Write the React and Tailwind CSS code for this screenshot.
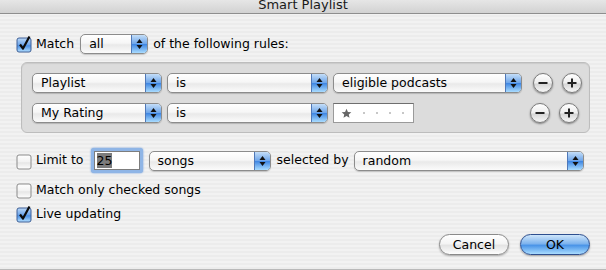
import React from "react";

// Aqua-style up/down arrows for popup buttons
function Arrows() {
  return (
    <svg width="7" height="12" viewBox="0 0 7 12">
      <path d="M3.5 1 L6.5 5 L0.5 5 Z" fill="#111" />
      <path d="M3.5 11 L6.5 7 L0.5 7 Z" fill="#111" />
    </svg>
  );
}

function Popup({ label, className = "" }) {
  return (
    <div
      className={`flex h-[20px] shrink-0 overflow-hidden rounded-[5px] border border-[#8c8c8c] bg-[linear-gradient(#ffffff,#f6f6f6_45%,#e9e9e9_55%,#fbfbfb)] shadow-[0_1px_1px_rgba(0,0,0,0.18)] ${className}`}
    >
      <span className="flex-1 truncate pl-[8px] leading-[18px]">{label}</span>
      <span className="flex w-[16px] items-center justify-center border-l border-[#4f78b8] bg-[linear-gradient(#c4def8,#6fa6ea_48%,#3f86e2_52%,#a9dcff)]">
        <Arrows />
      </span>
    </div>
  );
}

function Checkbox({ checked }) {
  return (
    <svg width="16" height="16" viewBox="0 0 16 16" className="shrink-0 overflow-visible">
      <defs>
        <linearGradient id="cbOn" x1="0" y1="0" x2="0" y2="1">
          <stop offset="0" stopColor="#bcd9f8" />
          <stop offset="0.5" stopColor="#6aa3ea" />
          <stop offset="0.55" stopColor="#4a8fe4" />
          <stop offset="1" stopColor="#b4e0ff" />
        </linearGradient>
        <linearGradient id="cbOff" x1="0" y1="0" x2="0" y2="1">
          <stop offset="0" stopColor="#ffffff" />
          <stop offset="0.5" stopColor="#f2f2f2" />
          <stop offset="0.55" stopColor="#e6e6e6" />
          <stop offset="1" stopColor="#ffffff" />
        </linearGradient>
      </defs>
      <rect
        x="1"
        y="2"
        width="14"
        height="14"
        rx="2"
        fill={checked ? "url(#cbOn)" : "url(#cbOff)"}
        stroke={checked ? "#3e5f96" : "#8a8a8a"}
      />
      {checked && (
        <path
          d="M4 8.5 L7 12.5 L13.5 0.5"
          fill="none"
          stroke="#0b0b0b"
          strokeWidth="2.2"
          strokeLinejoin="round"
        />
      )}
    </svg>
  );
}

function RoundButton({ plus }) {
  return (
    <div className="flex h-[20px] w-[20px] items-center justify-center rounded-full border border-[#7b7b7b] bg-[linear-gradient(#ffffff,#ededed_50%,#d6d6d6_55%,#f7f7f7)] shadow-[0_1px_2px_rgba(0,0,0,0.45)]">
      <svg width="12" height="12" viewBox="0 0 12 12">
        <path d="M1.5 6 H10.5" stroke="#222" strokeWidth="2" />
        {plus && <path d="M6 1.5 V10.5" stroke="#222" strokeWidth="2" />}
      </svg>
    </div>
  );
}

function Rating() {
  return (
    <div className="flex h-[20px] w-[81px] items-center gap-[11px] border border-[#9a9a9a] border-t-[#6e6e6e] bg-white pl-[7px]">
      <svg width="11" height="11" viewBox="0 0 24 24">
        <path
          d="M12 1.5l3.1 7 7.4.6-5.6 4.9 1.7 7.4L12 17.5l-6.6 3.9 1.7-7.4L1.5 9.1l7.4-.6z"
          fill="#666"
        />
      </svg>
      {[0, 1, 2, 3].map((i) => (
        <span key={i} className="h-[2px] w-[2px] rounded-full bg-[#b4b4b4]" />
      ))}
    </div>
  );
}

export default function App() {
  return (
    <div className="flex h-[270px] w-[606px] flex-col overflow-hidden border-b border-[#b9b9b9] bg-[repeating-linear-gradient(0deg,#ececec_0px,#ececec_2px,#f2f2f2_2px,#f2f2f2_4px)] font-['DejaVu_Sans',sans-serif] text-[12.5px] text-black">
      {/* title bar, cut off at the top */}
      <div className="flex h-[14px] justify-center overflow-hidden border-b border-[#8e8e8e] bg-[linear-gradient(#e6e6e6,#d2d2d2)]">
        <span className="-mt-[4px] text-[13px] leading-[18px] text-[#1a1a1a]">Smart Playlist</span>
      </div>

      {/* match row */}
      <div className="mt-[20px] flex h-[20px] items-center pl-[16px]">
        <Checkbox checked />
        <span className="ml-[4px]">Match</span>
        <Popup label="all" className="ml-[6px] w-[68px]" />
        <span className="ml-[5px]">of the following rules:</span>
      </div>

      {/* rules box */}
      <div className="mx-[21px] mt-[8px] flex h-[71px] w-[569px] flex-col gap-[10px] rounded-[6px] border border-[#bdbdbd] bg-[#dcdcdc] px-[10px] pt-[10px] shadow-[inset_0_1px_1px_rgba(0,0,0,0.08)]">
        <div className="flex h-[20px] items-center">
          <Popup label="Playlist" className="w-[130px]" />
          <Popup label="is" className="ml-[5px] w-[161px]" />
          <Popup label="eligible podcasts" className="ml-[5px] w-[189px]" />
          <div className="ml-[11px] flex gap-[9px]">
            <RoundButton />
            <RoundButton plus />
          </div>
        </div>
        <div className="flex h-[20px] items-center">
          <Popup label="My Rating" className="w-[130px]" />
          <Popup label="is" className="ml-[5px] w-[161px]" />
          <div className="ml-[5px] w-[189px]">
            <Rating />
          </div>
          <div className="ml-[11px] flex gap-[9px]">
            <RoundButton />
            <RoundButton plus />
          </div>
        </div>
      </div>

      {/* limit row */}
      <div className="mt-[15px] flex h-[25px] items-center pl-[16px]">
        <Checkbox />
        <span className="ml-[4px]">Limit to</span>
        <div className="ml-[7px] flex h-[25px] w-[52px] items-center rounded-[3px] bg-[#8fb5e6] p-[3px] shadow-[0_0_2px_#5b8fd6]">
          <div className="flex h-[19px] w-full items-center border border-[#7d7d7d] bg-white pl-[2px]">
            <span className="bg-[#7c7c7c] leading-[15px]">25</span>
          </div>
        </div>
        <Popup label="songs" className="ml-[6px] w-[122px]" />
        <span className="ml-[6px]">selected by</span>
        <Popup label="random" className="ml-[5px] w-[230px]" />
      </div>

      <div className="mt-[7px] flex h-[20px] items-center pl-[16px]">
        <Checkbox />
        <span className="ml-[4px]">Match only checked songs</span>
      </div>

      <div className="mt-[4px] flex h-[20px] items-center pl-[16px]">
        <Checkbox checked />
        <span className="ml-[4px]">Live updating</span>
      </div>

      {/* buttons */}
      <div className="mt-[10px] flex justify-end gap-[11px] pr-[16px]">
        <button className="h-[21px] w-[70px] rounded-full border border-[#8a8a8a] bg-[linear-gradient(#ffffff,#f4f4f4_45%,#e4e4e4_55%,#fdfdfd)] leading-[19px] shadow-[0_1px_2px_rgba(0,0,0,0.3)]">
          Cancel
        </button>
        <button className="h-[21px] w-[70px] rounded-full border border-[#2e4f8f] bg-[linear-gradient(#cfe6fb,#7fb4ee_45%,#4b95e8_55%,#a9dcff)] leading-[19px] shadow-[0_1px_2px_rgba(0,0,0,0.35)]">
          OK
        </button>
      </div>
    </div>
  );
}
